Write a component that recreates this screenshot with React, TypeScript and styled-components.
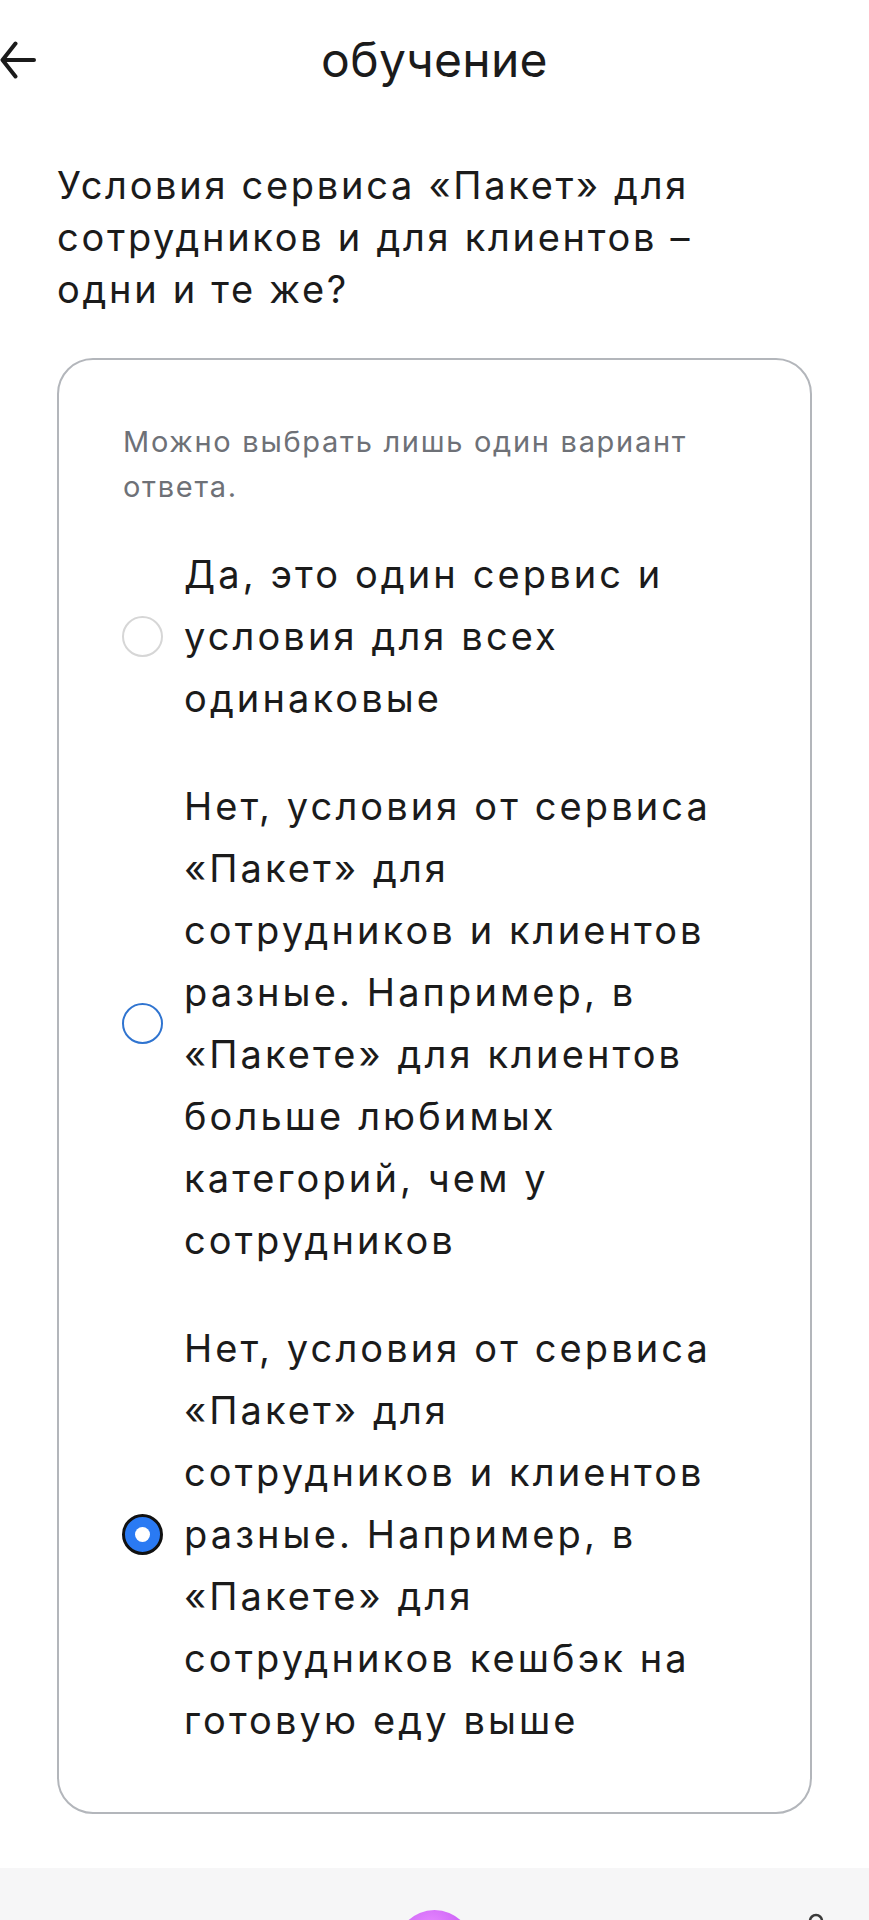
import React from "react";
import styled, { createGlobalStyle } from "styled-components";

type RadioState = "idle" | "focused" | "checked";

interface AnswerOption {
  id: string;
  lines: string[];
  state: RadioState;
}

const question = [
  "Условия сервиса «Пакет» для",
  "сотрудников и для клиентов –",
  "одни и те же?",
];

const hint = ["Можно выбрать лишь один вариант", "ответа."];

const options: AnswerOption[] = [
  {
    id: "same",
    state: "idle",
    lines: ["Да, это один сервис и", "условия для всех", "одинаковые"],
  },
  {
    id: "categories",
    state: "focused",
    lines: [
      "Нет, условия от сервиса",
      "«Пакет» для",
      "сотрудников и клиентов",
      "разные. Например, в",
      "«Пакете» для клиентов",
      "больше любимых",
      "категорий, чем у",
      "сотрудников",
    ],
  },
  {
    id: "cashback",
    state: "checked",
    lines: [
      "Нет, условия от сервиса",
      "«Пакет» для",
      "сотрудников и клиентов",
      "разные. Например, в",
      "«Пакете» для",
      "сотрудников кешбэк на",
      "готовую еду выше",
    ],
  },
];

const GlobalStyle = createGlobalStyle`
  html, body {
    margin: 0;
    padding: 0;
    background: #ffffff;
  }
  body {
    font-family: Inter, "Noto Sans", sans-serif;
    color: #1b1b1b;
    -webkit-font-smoothing: antialiased;
  }
`;

export default function App() {
  return (
    <>
      <GlobalStyle />
      <Page>
        <Header>
          <BackButton aria-label="Назад">
            <svg width="36" height="40" viewBox="0 0 36 40" fill="none">
              <path
                d="M34 20H3M15.5 3.5L2.5 20L15.5 36.5"
                stroke="#1b1b1b"
                strokeWidth="4"
                strokeLinecap="round"
                strokeLinejoin="round"
              />
            </svg>
          </BackButton>
          <Title>обучение</Title>
        </Header>

        <Question>
          {question.map((line) => (
            <Line key={line}>{line}</Line>
          ))}
        </Question>

        <Card>
          <Hint>
            {hint.map((line) => (
              <Line key={line}>{line}</Line>
            ))}
          </Hint>
          <OptionList role="radiogroup">
            {options.map((option) => (
              <OptionRow key={option.id} role="radio" aria-checked={option.state === "checked"}>
                <Radio $state={option.state} />
                <OptionText>
                  {option.lines.map((line, i) => (
                    <Line key={i}>{line}</Line>
                  ))}
                </OptionText>
              </OptionRow>
            ))}
          </OptionList>
        </Card>

        <BottomBar>
          <span />
          <NavOrb />
          <NavIcon>
            <svg width="30" height="30" viewBox="0 0 30 30" fill="none">
              <circle cx="15" cy="9" r="6" stroke="#3a3a3a" strokeWidth="2.5" />
              <path d="M4 28c1.5-6 6-9 11-9s9.5 3 11 9" stroke="#3a3a3a" strokeWidth="2.5" />
            </svg>
          </NavIcon>
        </BottomBar>
      </Page>
    </>
  );
}

const Page = styled.div`
  width: 869px;
  height: 1920px;
  overflow: hidden;
  display: flex;
  flex-direction: column;
`;

const Header = styled.header`
  height: 120px;
  display: grid;
  grid-template-columns: 1fr auto 1fr;
  align-items: center;
`;

const BackButton = styled.button`
  justify-self: start;
  border: none;
  background: none;
  padding: 0;
  margin: 0;
  display: flex;
  cursor: pointer;
`;

const Title = styled.h1`
  margin: 0;
  font-size: 48px;
  font-weight: 400;
  line-height: 1.2;
  letter-spacing: 0.3px;
`;

const Line = styled.span`
  display: block;
  white-space: nowrap;
`;

const Question = styled.h2`
  margin: 0;
  padding: 39px 57px 0;
  font-size: 38px;
  font-weight: 400;
  line-height: 52px;
  letter-spacing: 2.7px;
`;

const Card = styled.section`
  margin: 43px 57px 0;
  border: 2px solid #b3b6bb;
  border-radius: 36px;
  padding: 59px 40px 61px 64px;
`;

const Hint = styled.p`
  margin: 0 0 34px;
  font-size: 29px;
  line-height: 45px;
  color: #6e7177;
  letter-spacing: 1.7px;
`;

const OptionList = styled.div`
  display: flex;
  flex-direction: column;
  gap: 46px;
`;

const OptionRow = styled.label`
  display: flex;
  align-items: center;
  gap: 21px;
  cursor: pointer;
`;

const Radio = styled.span<{ $state: RadioState }>`
  flex: none;
  box-sizing: border-box;
  width: 41px;
  height: 41px;
  margin-left: -1px;
  border-radius: 50%;
  display: flex;
  align-items: center;
  justify-content: center;
  background: ${({ $state }) => ($state === "checked" ? "#2a7af3" : "#ffffff")};
  border: ${({ $state }) =>
    $state === "checked"
      ? "3px solid #111111"
      : $state === "focused"
      ? "2.5px solid #2f74d0"
      : "2px solid #d6d6d6"};

  &::after {
    content: "";
    display: ${({ $state }) => ($state === "checked" ? "block" : "none")};
    width: 15px;
    height: 15px;
    border-radius: 50%;
    background: #ffffff;
  }
`;

const OptionText = styled.div`
  font-size: 38px;
  line-height: 62px;
  letter-spacing: 3.1px;
`;

const BottomBar = styled.nav`
  margin-top: 54px;
  flex: 1;
  background: #f6f6f7;
  display: grid;
  grid-template-columns: 1fr auto 1fr;
  align-items: start;
  padding-top: 42px;
  overflow: hidden;
`;

const NavOrb = styled.span`
  width: 77px;
  height: 77px;
  border-radius: 50%;
  background: radial-gradient(circle at 45% 25%, #e98cff 0%, #c85cf5 55%, #a845ea 100%);
`;

const NavIcon = styled.span`
  justify-self: end;
  margin: 2px 38px 0 0;
  display: flex;
`;
